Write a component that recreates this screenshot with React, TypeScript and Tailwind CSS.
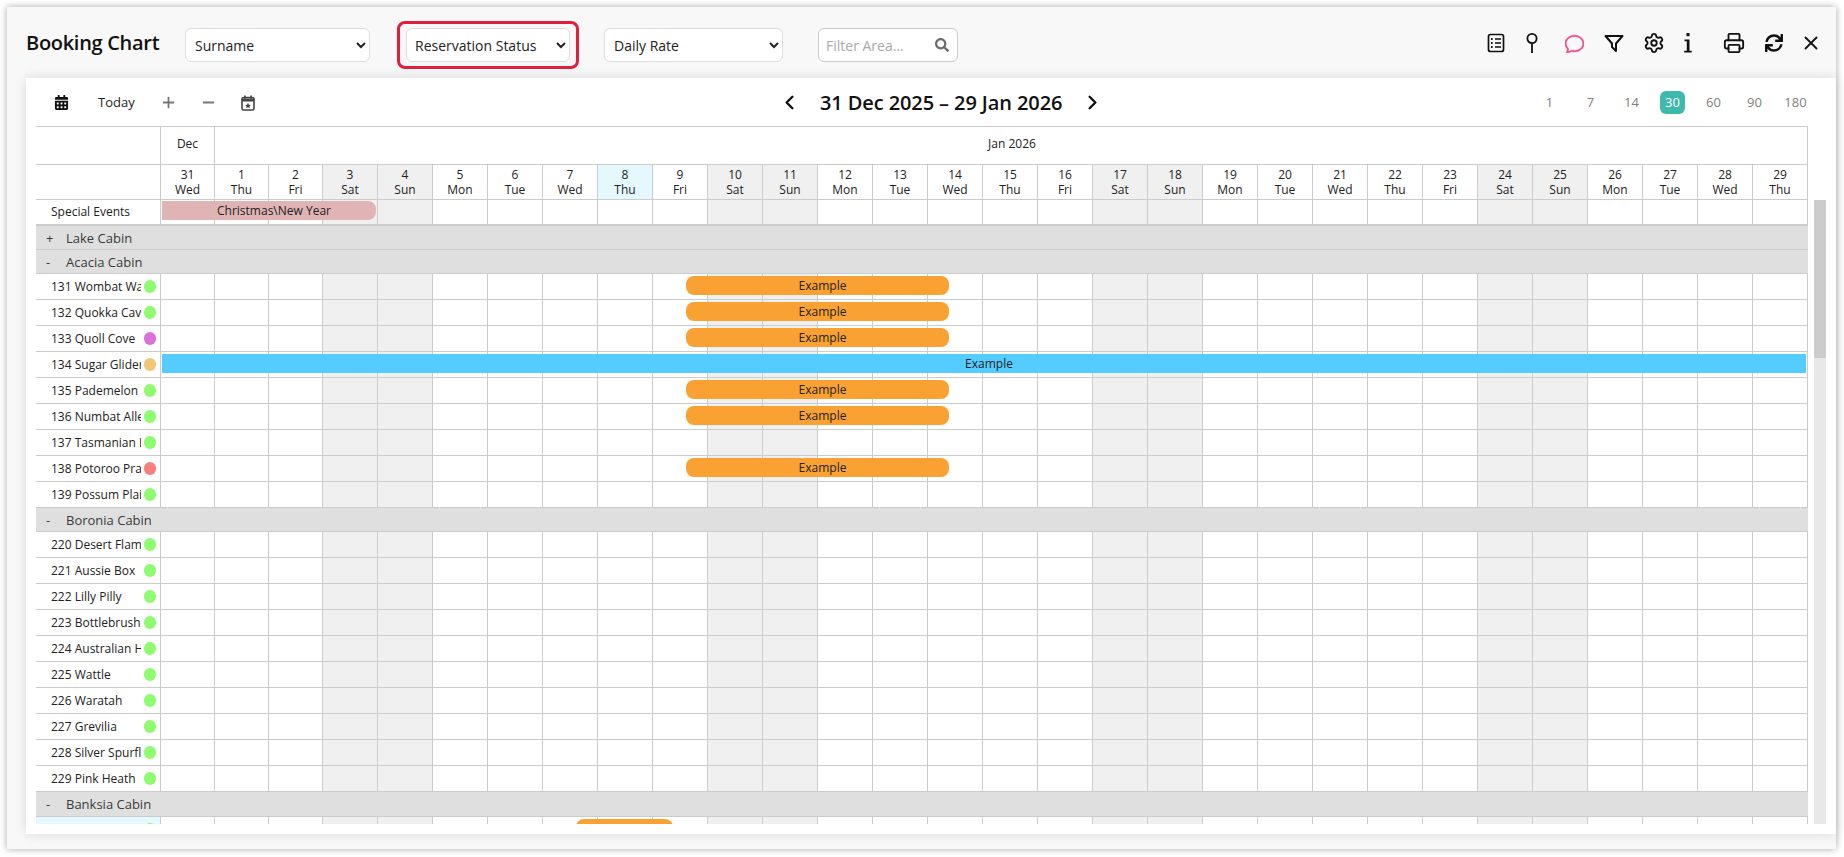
import { Minus, Plus, ChevronLeft, ChevronRight, Printer, Settings, X } from "lucide-react";
import { BsChat } from "react-icons/bs";
import { FaCalendarAlt, FaSearch, FaSync } from "react-icons/fa";

const weekdays = ["Wed", "Thu", "Fri", "Sat", "Sun", "Mon", "Tue"];

const days = Array.from({ length: 30 }, (_, i) => {
  const name = weekdays[i % 7];
  return {
    num: i === 0 ? 31 : i,
    name,
    weekend: name === "Sat" || name === "Sun",
    today: i === 8,
    narrow: i < 3,
  };
});

const GREEN = "bg-[#8FFB70]";

type Room = { name: string; dot: string; bar?: "orange" | "blue" };

const acacia: Room[] = [
  { name: "131 Wombat Warren", dot: GREEN, bar: "orange" },
  { name: "132 Quokka Cave", dot: GREEN, bar: "orange" },
  { name: "133 Quoll Cove", dot: "bg-[#DB70DB]", bar: "orange" },
  { name: "134 Sugar Glider", dot: "bg-[#EFC777]", bar: "blue" },
  { name: "135 Pademelon", dot: GREEN, bar: "orange" },
  { name: "136 Numbat Alley", dot: GREEN, bar: "orange" },
  { name: "137 Tasmanian Devil", dot: GREEN },
  { name: "138 Potoroo Prairie", dot: "bg-[#F98080]", bar: "orange" },
  { name: "139 Possum Plains", dot: GREEN },
];

const boronia: Room[] = [
  { name: "220 Desert Flame", dot: GREEN },
  { name: "221 Aussie Box", dot: GREEN },
  { name: "222 Lilly Pilly", dot: GREEN },
  { name: "223 Bottlebrush", dot: GREEN },
  { name: "224 Australian Heath", dot: GREEN },
  { name: "225 Wattle", dot: GREEN },
  { name: "226 Waratah", dot: GREEN },
  { name: "227 Grevilia", dot: GREEN },
  { name: "228 Silver Spurflower", dot: GREEN },
  { name: "229 Pink Heath", dot: GREEN },
];

function ChecklistIcon() {
  return (
    <svg width="18" height="20" viewBox="0 0 18 20" fill="none" stroke="#111" strokeWidth="1.7">
      <rect x="1.5" y="1.5" width="15" height="17" rx="2" />
      <path d="M8 6h6M8 10h6M8 14h6" />
      <path d="M4 6h1.6M4 10h1.6M4 14h1.6" strokeWidth="2" />
    </svg>
  );
}

function PinIcon() {
  return (
    <svg width="14" height="22" viewBox="0 0 14 22" fill="none" stroke="#111" strokeWidth="1.8">
      <circle cx="7" cy="6.5" r="4.6" />
      <path d="M7 11v10" />
    </svg>
  );
}

function FunnelIcon() {
  return (
    <svg width="20" height="19" viewBox="0 0 20 19" fill="none" stroke="#111" strokeWidth="2" strokeLinejoin="round">
      <path d="M1.5 2h17l-6.5 7.5V17l-4-4V9.5z" />
    </svg>
  );
}

function InfoIcon() {
  return (
    <svg width="10" height="22" viewBox="0 0 10 22" fill="#111">
      <rect x="3.5" y="1" width="3" height="3.2" />
      <path d="M1.5 7.5h5v11.2h2.2V20.5H1.2v-1.8h2.6v-9.4H1.5z" />
    </svg>
  );
}

function CalendarStarIcon() {
  return (
    <svg width="14" height="16" viewBox="0 0 14 16" fill="none">
      <rect x="1" y="2.5" width="12" height="12.5" rx="1.6" stroke="#444" strokeWidth="1.6" />
      <path d="M1 3.5h12v3H1z" fill="#444" />
      <path d="M4 .5v3M10 .5v3" stroke="#444" strokeWidth="1.6" />
      <path d="M7 7.8l.9 1.9 2 .2-1.5 1.4.4 2-1.8-1-1.8 1 .4-2-1.5-1.4 2-.2z" fill="#444" />
    </svg>
  );
}

function Cells() {
  return (
    <>
      {days.map((d) => (
        <div
          key={d.num}
          className={`h-full shrink-0 border-r border-[#ccc] ${d.narrow ? "w-[54px]" : "w-[55px]"} ${
            d.weekend ? "bg-[#F0F0F0]" : "bg-white"
          }`}
        />
      ))}
    </>
  );
}

function RoomRow({ room }: { room: Room }) {
  return (
    <div className="relative flex h-[26px] border-b border-[#ccc]">
      <div className="flex w-[125px] shrink-0 items-center border-r border-[#ccc] pl-[15px]">
        <span className="w-[90px] overflow-hidden whitespace-nowrap">{room.name}</span>
        <span className={`ml-[3px] h-[13px] w-[12px] rounded-full ${room.dot}`} />
      </div>
      <Cells />
      {room.bar === "orange" && (
        <div className="absolute left-[650px] top-[2px] flex h-[19px] w-[263px] items-center justify-center rounded-lg bg-[#F9A133] pl-[10px] pt-[1px]">
          Example
        </div>
      )}
      {room.bar === "blue" && (
        <div className="absolute left-[126px] top-[2px] flex h-[19px] w-[1644px] items-center justify-center bg-[#55CCFF] pl-[10px] pt-[1px]">
          Example
        </div>
      )}
    </div>
  );
}

function GroupRow({ sign, name, height }: { sign: string; name: string; height: string }) {
  return (
    <div className={`flex items-center border-b border-[#ccc] bg-[#DFDFDF] pt-[2px] text-[13px] font-medium text-[#3a3a3a] ${height}`}>
      <span className="w-[30px] pl-[10px]">{sign}</span>
      <span>{name}</span>
    </div>
  );
}

export default function App() {
  return (
    <div className="h-[857px] w-[1844px] overflow-hidden bg-white pl-[7px] pt-[7px] font-['Open_Sans',sans-serif] text-[#222]">
      <div className="h-[842px] w-[1829px] bg-[#F8F8F8] shadow-[0_0_7px_rgba(0,0,0,0.35)]">
        {/* top bar */}
        <div className="flex h-[71px] items-center pl-[19px] pr-[13px] pt-[5px]">
          <h1 className="mb-[4px] w-[159px] shrink-0 text-[20px] font-semibold tracking-[-0.3px] text-[#111]">Booking Chart</h1>
          <select className="h-[34px] w-[185px] rounded-md border border-[#ddd] bg-white px-[5px] text-[14px] text-[#222]">
            <option>Surname</option>
          </select>
          <div className="ml-[27px] flex h-[48px] w-[182px] items-center justify-center rounded-lg border-[3px] border-[#DE1F3E]">
            <select className="h-[34px] w-[164px] rounded-md border border-[#ddd] bg-white px-[4px] text-[14px] text-[#222]">
              <option>Reservation Status</option>
            </select>
          </div>
          <select className="ml-[25px] h-[34px] w-[179px] rounded-md border border-[#ddd] bg-white px-[5px] text-[14px] text-[#222]">
            <option>Daily Rate</option>
          </select>
          <div className="ml-[35px] flex h-[34px] w-[140px] items-center justify-between rounded-md border border-[#ccc] bg-white pl-[7px] pr-[8px] text-[14px] text-[#aaa]">
            <span>Filter Area...</span>
            <FaSearch className="text-[#6b6b6b]" size={14} />
          </div>

          <div className="mb-[4px] ml-auto flex items-center">
            <div className="flex w-6 justify-center"><ChecklistIcon /></div>
            <div className="ml-[12px] flex w-6 justify-center"><PinIcon /></div>
            <div className="ml-[18px] flex w-6 justify-center"><BsChat size={19} className="text-[#F0457F]" stroke="currentColor" strokeWidth={0.5} /></div>
            <div className="ml-[16px] flex w-6 justify-center"><FunnelIcon /></div>
            <div className="ml-[16px] flex w-6 justify-center"><Settings size={22} color="#111" strokeWidth={2} /></div>
            <div className="ml-[10px] flex w-6 justify-center"><InfoIcon /></div>
            <div className="ml-[22px] flex w-6 justify-center"><Printer size={22} color="#111" strokeWidth={2} /></div>
            <div className="ml-[16px] flex w-6 justify-center"><FaSync size={18} color="#111" /></div>
            <div className="ml-[13px] flex w-6 justify-center"><X size={22} color="#111" strokeWidth={2} /></div>
          </div>
        </div>

        {/* white panel */}
        <div className="ml-[19px] h-[756px] bg-white pl-[10px] text-[12px] shadow-[0_0_12px_rgba(0,0,0,0.12)]">
          {/* toolbar */}
          <div className="flex h-[48px] items-center pr-[20px] pt-[1px]">
            <div className="flex w-[742px] shrink-0 items-center">
              <FaCalendarAlt size={15} color="#111" className="ml-[18px]" />
              <span className="ml-[29px] w-[50px] text-[13px] text-[#222]">Today</span>
              <Plus size={17} color="#777" strokeWidth={2.5} className="ml-[12px]" />
              <Minus size={17} color="#777" strokeWidth={2.5} className="ml-[23px]" />
              <div className="ml-[24px]"><CalendarStarIcon /></div>
            </div>
            <ChevronLeft size={23} color="#111" strokeWidth={2.5} />
            <span className="ml-[19px] w-[244px] whitespace-nowrap text-[20px] font-semibold tracking-[-0.1px] text-[#111]">
              31 Dec 2025 – 29 Jan 2026
            </span>
            <ChevronRight size={23} color="#111" strokeWidth={2.5} className="ml-[17px]" />
            <div className="ml-auto flex items-center text-[13px] text-[#808080]">
              {["1", "7", "14", "30", "60", "90", "180"].map((z) => (
                <div key={z} className="flex w-[41px] justify-center">
                  {z === "30" ? (
                    <span className="flex h-[23px] w-[25px] items-center justify-center rounded-md bg-[#3FB8AD] text-white">{z}</span>
                  ) : (
                    z
                  )}
                </div>
              ))}
            </div>
          </div>

          {/* date header */}
          <div className="w-[1772px] border-t border-[#ccc]">
            <div className="flex h-[38px] border-b border-[#ccc]">
              <div className="w-[125px] shrink-0 border-r border-[#ccc]" />
              <div className="flex w-[54px] shrink-0 items-center justify-center border-r border-[#ccc] pb-[3px]">Dec</div>
              <div className="flex flex-1 items-center justify-center border-r border-[#ccc] pb-[3px] pl-[2px]">Jan 2026</div>
            </div>
            <div className="flex h-[35px] border-b border-[#ccc]">
              <div className="w-[125px] shrink-0 border-r border-[#ccc]" />
              {days.map((d) => (
                <div
                  key={d.num}
                  className={`flex shrink-0 flex-col items-center justify-center border-r border-[#ccc] leading-[15px] ${
                    d.narrow ? "w-[54px]" : "w-[55px]"
                  } ${d.today ? "bg-[#E5F8FE]" : d.weekend ? "bg-[#F0F0F0]" : "bg-white"}`}
                >
                  <span>{d.num}</span>
                  <span>{d.name}</span>
                </div>
              ))}
            </div>
          </div>

          {/* scrolling body */}
          <div className="flex h-[624px] overflow-hidden">
            <div className="w-[1772px] shrink-0">
              <div className="relative flex h-[26px] border-b-2 border-[#ccc]">
                <div className="flex w-[125px] shrink-0 items-center border-r border-[#ccc] pl-[15px]">Special Events</div>
                <Cells />
                <div className="absolute left-[126px] top-[1px] flex h-[19px] w-[214px] items-center justify-center rounded-r-lg bg-[#E0B4B4] pl-[10px]">
                  Christmas\New Year
                </div>
              </div>
              <GroupRow sign="+" name="Lake Cabin" height="h-[24px]" />
              <GroupRow sign="-" name="Acacia Cabin" height="h-[24px]" />
              {acacia.map((r) => (
                <RoomRow key={r.name} room={r} />
              ))}
              <GroupRow sign="-" name="Boronia Cabin" height="h-[24px]" />
              {boronia.map((r) => (
                <RoomRow key={r.name} room={r} />
              ))}
              <GroupRow sign="-" name="Banksia Cabin" height="h-[25px]" />
              <div className="relative flex h-[26px]">
                <div className="flex w-[125px] shrink-0 items-start justify-end border-r border-[#ccc] bg-[#E5F8FE] pr-[4px] pt-[6px]">
                  <span className={`h-[13px] w-[12px] rounded-full ${GREEN}`} />
                </div>
                <Cells />
                <div className="absolute left-[540px] top-[2px] h-[19px] w-[97px] rounded-lg bg-[#F9A133]" />
              </div>
            </div>
            <div className="ml-[6px] w-[12px] shrink-0 bg-[#E8E8E8]">
              <div className="h-[158px] bg-[#CCCCCC]" />
            </div>
          </div>
        </div>
      </div>
    </div>
  );
}
